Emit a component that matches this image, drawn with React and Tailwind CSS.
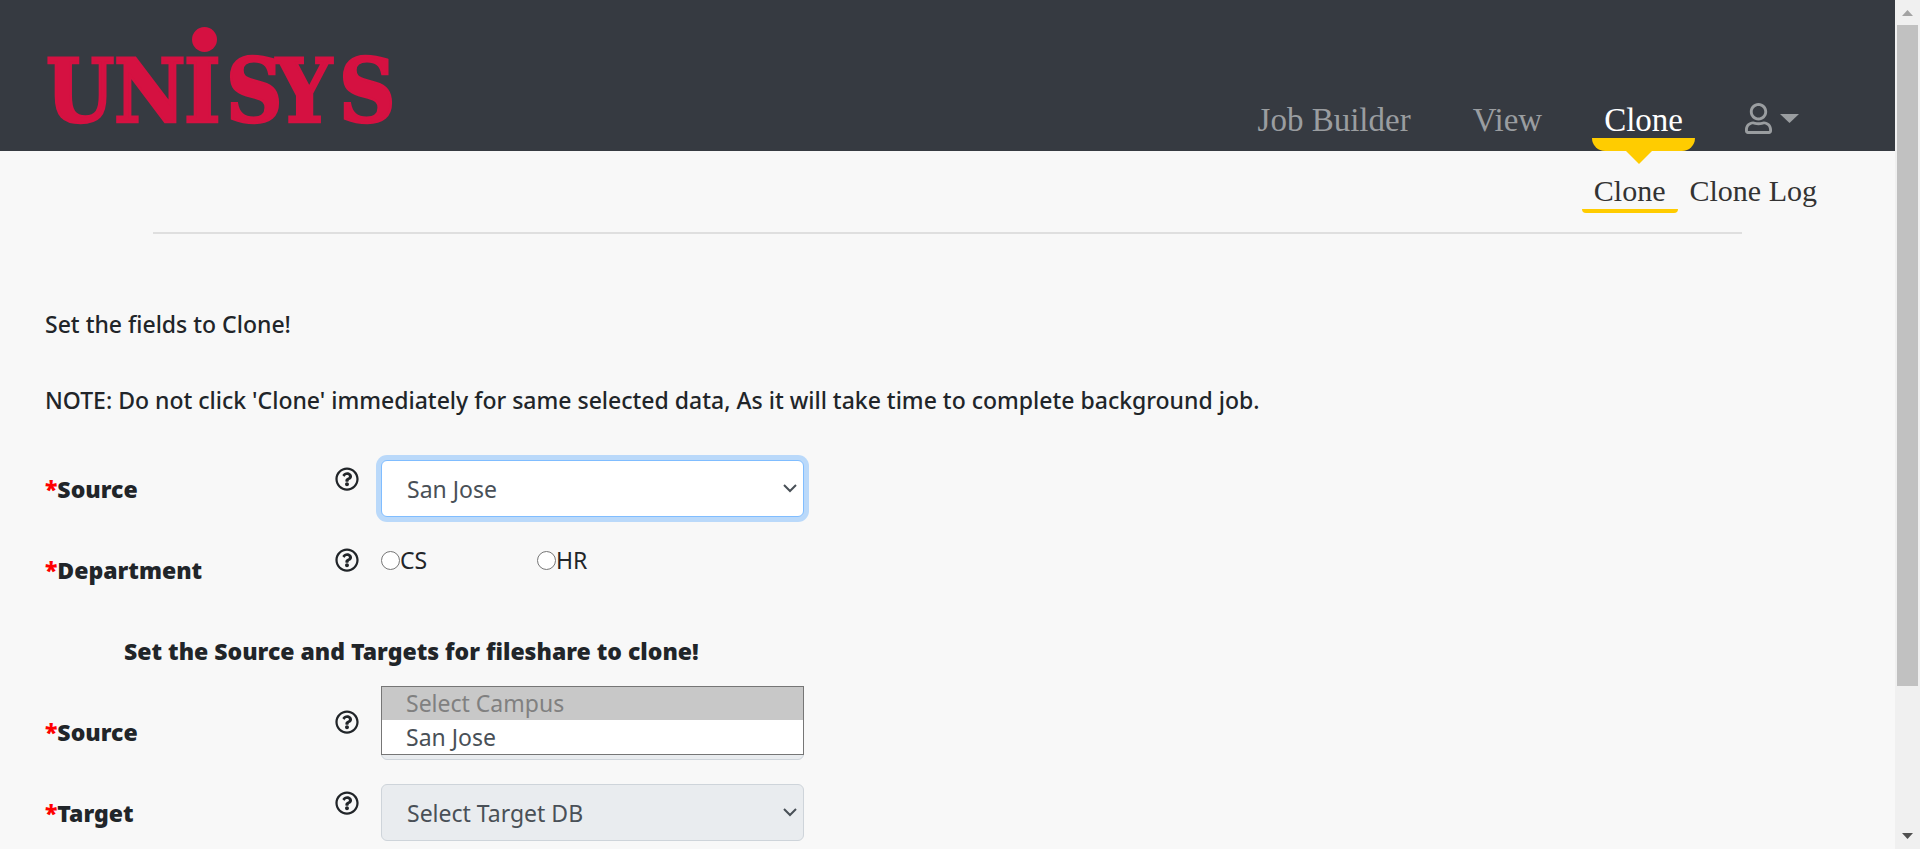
import React from "react";
import { FaRegUser, FaRegQuestionCircle } from "react-icons/fa";

function Logo() {
  return (
    <svg role="img" aria-label="Unisys" viewBox="0 0 346 98" className="h-[98px] w-[346px] overflow-visible fill-[#d51141]">
      <text
        y="95"
        x="-1 67 137 179 229 292"
        fontSize="87"
        fontWeight="700"
        strokeWidth="2.5"
        className="stroke-[#d51141] [font-family:'DejaVu_Serif_Condensed','DejaVu_Serif',serif]"
      >
        UNISYS
      </text>
      <circle cx="157.5" cy="12.5" r="12.5" />
    </svg>
  );
}

function NavLink({ children, active }) {
  return (
    <a
      href="#"
      className={
        active
          ? "relative block px-3 pb-3 text-[33px] leading-[38px] text-white"
          : "block px-3 pb-3 text-[33px] leading-[38px] text-[#9a9da0]"
      }
    >
      {children}
      {active && (
        <span className="absolute inset-x-0 bottom-0 h-[13px] rounded-b-[13px] bg-[#ffcc00]">
          <svg viewBox="0 0 28 14" className="absolute left-[33px] top-[12px] h-[14px] w-[28px] fill-[#ffcc00]">
            <path d="M0 0h28L14 14z" />
          </svg>
        </span>
      )}
    </a>
  );
}

function Header() {
  return (
    <header className="flex h-[151px] items-end justify-between bg-[#363a41] pl-[47px] pr-24 [font-family:'Liberation_Serif',serif]">
      <a href="#" className="mb-[26px] block">
        <Logo />
      </a>
      <nav className="flex items-end gap-[38px]">
        <NavLink>Job Builder</NavLink>
        <NavLink>View</NavLink>
        <NavLink active>Clone</NavLink>
        <button type="button" aria-label="Account" className="mb-[17px] flex items-center gap-2 pl-3 text-[#9a9da0]">
          <FaRegUser className="h-[31px] w-[27px]" />
          <svg viewBox="0 0 19 9" className="h-[9px] w-[19px] fill-current">
            <path d="M0 0h19L9.5 9z" />
          </svg>
        </button>
      </nav>
    </header>
  );
}

function SubNav() {
  return (
    <nav className="flex justify-end pr-[66px] pt-[22px] text-[30px] leading-9 text-[#333] [font-family:'Liberation_Serif',serif]">
      <a href="#" className="block px-3">
        Clone
        <span className="-mx-3 block h-1 rounded-b bg-[#ffcc00]" />
      </a>
      <a href="#" className="block px-3">
        Clone Log
      </a>
    </nav>
  );
}

function Row({ label, htmlFor, children }) {
  return (
    <div className="mb-6 flex min-h-[57px]">
      <label htmlFor={htmlFor} className="w-[290px] pt-[13px] text-[23px] font-black leading-8">
        <span className="text-[#ff0000]">*</span>
        {label}
      </label>
      <span className="w-[46px] pt-[7px]">
        <FaRegQuestionCircle className="size-6" />
      </span>
      <div className="relative w-[423px]">{children}</div>
    </div>
  );
}

function Chevron() {
  return (
    <svg viewBox="0 0 14 9" className="pointer-events-none absolute right-[7px] top-[24px] h-[9px] w-[14px] fill-none stroke-[#495057] stroke-2">
      <path d="M1 1l6 6 6-6" />
    </svg>
  );
}

function Select({ id, focused, disabled, children }) {
  return (
    <>
      <select
        id={id}
        disabled={disabled}
        className={
          focused
            ? "block h-[57px] w-full appearance-none rounded-md border border-[#80bdff] bg-white px-[25px] pt-0.5 text-[23px] text-[#495057] opacity-100 ring-5 ring-[#bad9fa] outline-none"
            : "block h-[57px] w-full appearance-none rounded-md border border-[#ced4da] bg-[#e9ecef] px-[25px] pt-0.5 text-[23px] text-[#495057] opacity-100 outline-none"
        }
      >
        {children}
      </select>
      <Chevron />
    </>
  );
}

function Radio({ id, text }) {
  return (
    <label htmlFor={id} className="flex w-[156px] items-center text-[23px] leading-8">
      <input
        id={id}
        type="radio"
        name="department"
        className="size-[19px] appearance-none rounded-full border border-[#767676] bg-white"
      />
      {text}
    </label>
  );
}

function Scrollbar() {
  return (
    <div aria-hidden="true" className="flex w-[25px] shrink-0 flex-col items-center bg-[#f0f0f0]">
      <svg viewBox="0 0 25 25" className="size-[25px] fill-[#a3a3a3]">
        <path d="M7 16h11l-5.500-6z" />
      </svg>
      <div className="flex w-[21px] flex-1 flex-col">
        <div className="grow-[661] bg-[#c1c1c1]" />
        <div className="grow-[138]" />
      </div>
      <svg viewBox="0 0 25 25" className="size-[25px] fill-[#505050]">
        <path d="M7 9h11l-5.500 6z" />
      </svg>
    </div>
  );
}

export default function App() {
  return (
    <div className="flex h-screen overflow-hidden bg-[#f8f8f8] text-[#212529] [font-family:'Noto_Sans',sans-serif]">
      <div className="min-w-0 flex-1 overflow-hidden">
        <Header />
        <SubNav />
        <hr className="mx-[153px] mt-[19px] border-t-2 border-[#dfdfdf]" />
        <main className="px-[45px] pt-[72px]">
          <h1 className="text-[23px] font-medium leading-9">Set the fields to Clone!</h1>
          <p className="mt-10 text-[23px] font-medium leading-9">
            NOTE: Do not click 'Clone' immediately for same selected data, As it will take time to complete background job.
          </p>
          <form className="mt-[42px]">
            <Row label="Source" htmlFor="source">
              <Select id="source" focused>
                <option>San Jose</option>
              </Select>
            </Row>
            <Row label="Department" htmlFor="cs">
              <div className="flex pt-[3px]">
                <Radio id="cs" text="CS" />
                <Radio id="hr" text="HR" />
              </div>
            </Row>
            <h2 className="mb-6 h-[57px] pl-[79px] pt-[13px] text-[23px] font-black leading-8">
              Set the Source and Targets for fileshare to clone!
            </h2>
            <Row label="Source" htmlFor="fileshare-source">
              <Select id="fileshare-source" disabled>
                <option>Select Campus</option>
              </Select>
              <ul role="listbox" className="absolute inset-x-0 -top-[17px] border border-[#767676] bg-white text-[23px] leading-[33px] text-[#495057]">
                <li role="option" aria-selected="true" className="bg-[#c8c8c8] px-6 text-[#808080]">
                  Select Campus
                </li>
                <li role="option" aria-selected="false" className="px-6 pt-px">
                  San Jose
                </li>
              </ul>
            </Row>
            <Row label="Target" htmlFor="target">
              <Select id="target" disabled>
                <option>Select Target DB</option>
              </Select>
            </Row>
          </form>
        </main>
      </div>
      <Scrollbar />
    </div>
  );
}
